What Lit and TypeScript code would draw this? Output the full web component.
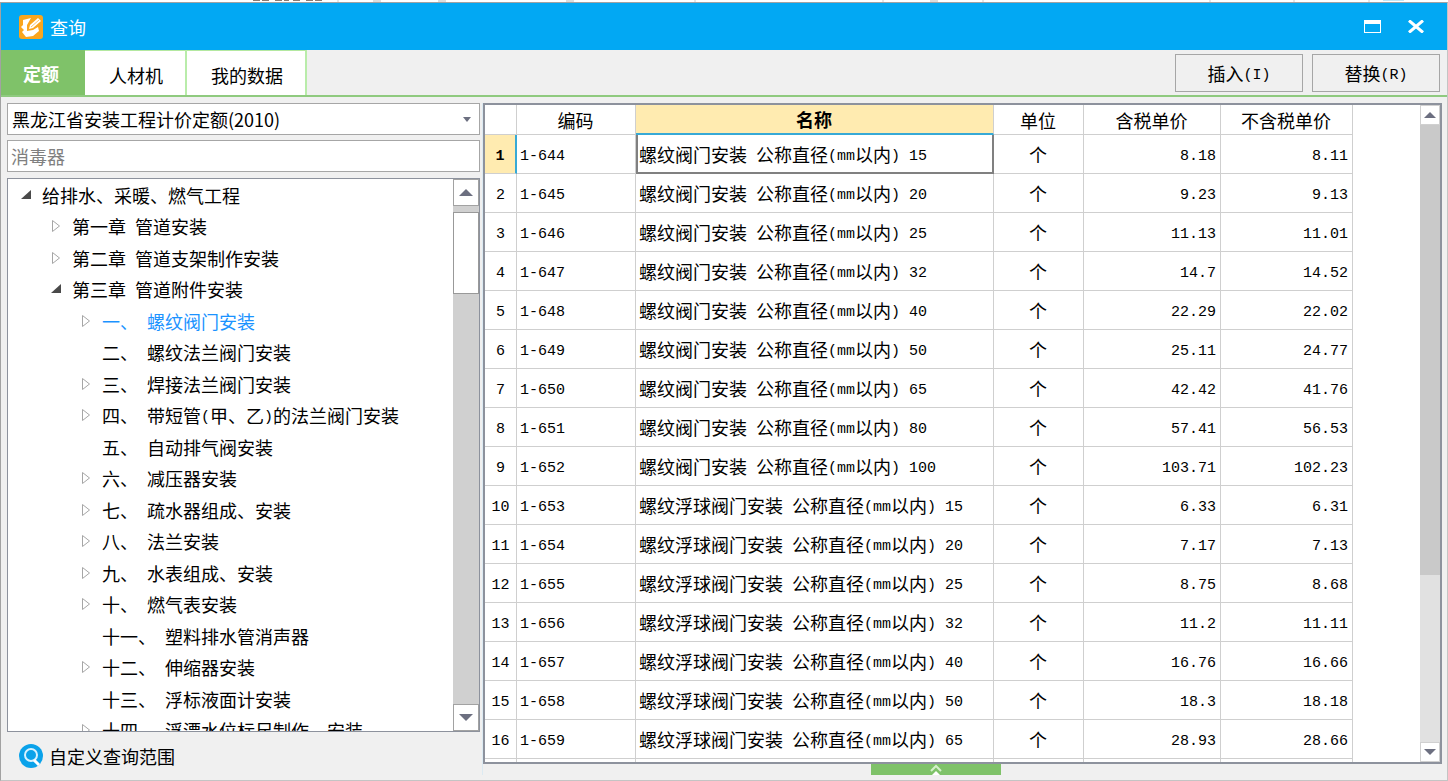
import { LitElement, html, css, svg } from "lit";
import { customElement, state } from "lit/decorators.js";

type Mark = "open" | "closed" | "none";
interface TreeNode { level: number; mark: Mark; label: string; }
interface Row { code: string; name: string; price: string; net: string; }

const TREE: TreeNode[] = [
  { level: 0, mark: "open", label: "给排水、采暖、燃气工程" },
  { level: 1, mark: "closed", label: "第一章 管道安装" },
  { level: 1, mark: "closed", label: "第二章 管道支架制作安装" },
  { level: 1, mark: "open", label: "第三章 管道附件安装" },
  { level: 2, mark: "closed", label: "一、 螺纹阀门安装" },
  { level: 2, mark: "none", label: "二、 螺纹法兰阀门安装" },
  { level: 2, mark: "closed", label: "三、 焊接法兰阀门安装" },
  { level: 2, mark: "closed", label: "四、 带短管(甲、乙)的法兰阀门安装" },
  { level: 2, mark: "none", label: "五、 自动排气阀安装" },
  { level: 2, mark: "closed", label: "六、 减压器安装" },
  { level: 2, mark: "closed", label: "七、 疏水器组成、安装" },
  { level: 2, mark: "closed", label: "八、 法兰安装" },
  { level: 2, mark: "closed", label: "九、 水表组成、安装" },
  { level: 2, mark: "closed", label: "十、 燃气表安装" },
  { level: 2, mark: "none", label: "十一、 塑料排水管消声器" },
  { level: 2, mark: "closed", label: "十二、 伸缩器安装" },
  { level: 2, mark: "none", label: "十三、 浮标液面计安装" },
  { level: 2, mark: "closed", label: "十四、 浮漂水位标尺制作、安装" },
];

const SCREW = "螺纹阀门安装 公称直径(mm以内) ";
const FLOAT = "螺纹浮球阀门安装 公称直径(mm以内) ";
const ROWS: Row[] = [
  { code: "1-644", name: SCREW + "15", price: "8.18", net: "8.11" },
  { code: "1-645", name: SCREW + "20", price: "9.23", net: "9.13" },
  { code: "1-646", name: SCREW + "25", price: "11.13", net: "11.01" },
  { code: "1-647", name: SCREW + "32", price: "14.7", net: "14.52" },
  { code: "1-648", name: SCREW + "40", price: "22.29", net: "22.02" },
  { code: "1-649", name: SCREW + "50", price: "25.11", net: "24.77" },
  { code: "1-650", name: SCREW + "65", price: "42.42", net: "41.76" },
  { code: "1-651", name: SCREW + "80", price: "57.41", net: "56.53" },
  { code: "1-652", name: SCREW + "100", price: "103.71", net: "102.23" },
  { code: "1-653", name: FLOAT + "15", price: "6.33", net: "6.31" },
  { code: "1-654", name: FLOAT + "20", price: "7.17", net: "7.13" },
  { code: "1-655", name: FLOAT + "25", price: "8.75", net: "8.68" },
  { code: "1-656", name: FLOAT + "32", price: "11.2", net: "11.11" },
  { code: "1-657", name: FLOAT + "40", price: "16.76", net: "16.66" },
  { code: "1-658", name: FLOAT + "50", price: "18.3", net: "18.18" },
  { code: "1-659", name: FLOAT + "65", price: "28.93", net: "28.66" },
];

// Latin runs are set in a half-width face beside the full-width characters.
const mixed = (text: string) =>
  text.split(/([\x20-\x7e]+)/).filter(Boolean).map((part) =>
    /^[\x20-\x7e]/.test(part) ? html`<span class="latin">${part}</span>` : part);

const marks = {
  open: svg`<path d="M10 1v9H0z" fill="#4a4a4a"/>`,
  closed: svg`<path d="M1.5 0.5v11l7-5.5z" fill="#fff" stroke="#a6a6a6"/>`,
  none: svg``,
};

const arrow = (up: boolean) => html`<svg width="14" height="7" viewBox="0 0 14 7" aria-hidden="true">
  <path d=${up ? "M7 0l7 7H0z" : "M0 0h14L7 7z"} fill="#6c6f80"/></svg>`;

@customElement("app-root")
export class AppRoot extends LitElement {
  @state() private node = 4;
  @state() private row = 0;

  static styles = css`
    :host {
      display: flex; flex-direction: column; height: 100vh; overflow: hidden;
      background: #fff; color: #000;
      font: 18px/24px "Noto Sans CJK SC", sans-serif;
    }
    * { box-sizing: border-box; }
    button, input, select { font: inherit; color: inherit; margin: 0; border-radius: 0; }
    button { padding: 0; border: 0; background: none; cursor: pointer; }
    .latin { font-family: "Liberation Mono", monospace; font-size: 15px; line-height: 0; vertical-align: 2px; white-space: pre; }
    .behind { flex: none; height: 2px; background: #fff; }
    .behind svg { display: block; }
    .window {
      flex: 1; min-height: 0; display: flex; flex-direction: column;
      border: 1px solid #a2a2a2; border-right-color: #c4c4c4; border-bottom-color: #c4c4c4;
      background: #f0f0f0;
    }
    .title { flex: none; height: 47px; background: #02a8f3; color: #fff; display: flex; align-items: center; padding: 0 22px 0 18px; }
    .title h1 { flex: 1; margin: 0 0 0 7px; font-size: 18px; font-weight: 400; }
    .title button { display: flex; }
    .title button + button { margin-left: 26px; }
    .bar { flex: none; height: 47px; display: flex; border-bottom: 2px solid #8fca7f; padding-right: 7px; }
    .tab { height: 45px; background: #fff; border-top: 1px solid #b4e8a0; border-right: 2px solid #b9ecaa; padding: 4px 22px 0 24px; }
    .tab.on { background: #7fc269; border-color: #7fc269; color: #fff; font-weight: 700; padding: 0 24px 0 22px; }
    .acts { margin-left: auto; display: flex; gap: 9px; padding-top: 4px; }
    .act { width: 128px; height: 38px; border: 1px solid #a6a6a6; background: #f0f0f0; }
    .body { flex: 1; min-height: 0; display: grid; grid-template: minmax(0, 1fr) / 473px minmax(0, 1fr); padding: 6px 5px 0 6px; }
    .side { display: flex; flex-direction: column; min-height: 0; }
    .pick { flex: none; display: grid; align-items: center; margin-bottom: 5px; }
    .pick select, .pick svg { grid-area: 1 / 1; }
    .pick svg { justify-self: end; margin-right: 9px; pointer-events: none; }
    .pick select, .find { width: 100%; height: 32px; appearance: none; border: 1px solid #a6a6a6; background: #fff; padding: 0 4px; outline: none; }
    .find { flex: none; margin-bottom: 6px; padding: 0 3px; }
    .find::placeholder { color: #808080; opacity: 1; }
    .tree { flex: 1; min-height: 0; display: flex; overflow: hidden; border: 1px solid #8d929d; background: #fff; }
    .nodes { flex: 1; height: 567px; margin: 0; padding: 0; list-style: none; display: grid; grid-auto-rows: minmax(0, 1fr); }
    .node { display: flex; align-items: center; gap: 10px; white-space: nowrap; padding-left: 13px; cursor: default; }
    .l1 { padding-left: 43px; }
    .l2 { padding-left: 73px; }
    .node svg { flex: none; }
    .node.on { color: #1b93ff; }
    .vbar { flex: none; width: 26px; display: flex; flex-direction: column; background: #d0d0d0; }
    .vbar button { flex: none; height: 27px; display: flex; align-items: center; justify-content: center; background: #fff; border: 1px solid #a2a2a2; }
    .thumb { height: 82px; margin: 6px 0 auto; background: #fff; border: 1px solid #999; }
    .foot { flex: none; height: 48px; display: flex; align-items: center; gap: 6px; padding-left: 12px; }
    .foot svg { flex: none; }
    .main { min-width: 0; min-height: 0; display: flex; flex-direction: column; border-left: 1px solid #dceaf2; margin: 0 0 5px 2px; }
    .panel { flex: 1; min-height: 0; display: flex; overflow: hidden; border: 2px solid #8d929d; background: #fff; }
    .scroll { flex: 1; overflow: hidden; }
    table { border-collapse: separate; border-spacing: 0; table-layout: fixed; width: 868px; }
    .c0 { width: 32px; } .c1 { width: 119px; } .c2 { width: 358px; } .c3 { width: 90px; } .c4 { width: 137px; } .c5 { width: 132px; }
    th, td { padding: 0 4px 0 3px; border-right: 1px solid #cfcfcf; border-bottom: 1px solid #cfcfcf; font-weight: 400; white-space: nowrap; overflow: hidden; }
    thead th { height: 30px; }
    tbody th, tbody td { height: 39px; text-align: left; }
    tbody th { text-align: center; padding: 0; }
    td.num { text-align: right; }
    td.unit { text-align: center; }
    th.hot { background: #ffebb0; font-weight: 700; border-bottom: 2px solid #37a9d6; }
    tr.on th { background: #ffebb0; font-weight: 700; border-right: 2px solid #37a9d6; }
    tr.on .name { box-shadow: inset 2px 0 #808080, inset -1px -1px #808080; border-color: #808080; }
    .rbar { flex: none; width: 20px; display: flex; flex-direction: column; background: #e1e1e1; }
    .rbar button { flex: none; height: 20px; display: flex; align-items: center; justify-content: center; background: #fff; border: 1px solid #d0d0d0; }
    .rbar svg { width: 12px; height: 6px; }
    .rthumb { height: 450px; background: #c9c9c9; margin-bottom: auto; }
    .pull { flex: none; align-self: center; width: 130px; height: 11px; background: #7fc269; display: flex; justify-content: center; margin-right: 54px; }
  `;

  render() {
    return html`
      <div class="behind"><svg width="1448" height="2" aria-hidden="true">
        <path d="M253 0h17M275 0h14M293 0h8M306 0h18" stroke="#8a7a72" stroke-width="2" stroke-dasharray="7 2"/>
        <path d="M338 0v2M695 0v2M883 0v2M983 0v2M1210 0v2M1294 0v2M1369 0v2" stroke="#ccc"/>
        <path d="M373 1h8M438 1h8M566 1h8M930 1h8" stroke="#bbb"/>
        <path d="M1383 0h21" stroke="#bfe6f7" stroke-width="2"/>
      </svg></div>
      <div class="window">
        <header class="title">
          <svg width="24" height="24" viewBox="0 0 24 24" aria-hidden="true">
            <rect width="24" height="24" rx="3" fill="#faa61e"/>
            <path d="M4 5l8-2-4 7v6l6-1 5-3 1 4-6 5-7 1-4-5 2-2-3-3 2-2z" fill="#fff"/>
            <path d="M10 14l1-4 8-7 3 3-8 7z" fill="#fff"/>
            <path d="M12 12l8-7" stroke="#fbc56a"/>
          </svg>
          <h1>查询</h1>
          <button aria-label="最大化"><svg width="17" height="13" viewBox="0 0 17 13"><path d="M0 0h17v13H0zM1 4v8h15V4z" fill="#fff" fill-rule="evenodd"/></svg></button>
          <button aria-label="关闭"><svg width="18" height="13" viewBox="0 0 18 13"><path d="M2 0.5l14 12M16 0.5l-14 12" stroke="#fff" stroke-width="3"/></svg></button>
        </header>
        <nav class="bar">
          <button class="tab on">定额</button>
          <button class="tab">人材机</button>
          <button class="tab">我的数据</button>
          <div class="acts">
            <button class="act">${mixed("插入(I)")}</button>
            <button class="act">${mixed("替换(R)")}</button>
          </div>
        </nav>
        <div class="body">
          <section class="side">
            <div class="pick">
              <select aria-label="定额库"><option>黑龙江省安装工程计价定额(2010)</option></select>
              <svg width="8" height="5" viewBox="0 0 8 5" aria-hidden="true"><path d="M0 0h8L4 5z" fill="#6c6f80"/></svg>
            </div>
            <input class="find" type="text" placeholder="消毒器" aria-label="消毒器" />
            <div class="tree">
              <ul class="nodes" role="tree">
                ${TREE.map((n, i) => html`<li role="treeitem" class="node l${n.level} ${i === this.node ? "on" : ""}" @click=${() => (this.node = i)}>
                  <svg width="11" height="12" viewBox="0 0 11 12" aria-hidden="true">${marks[n.mark]}</svg>
                  <span>${mixed(n.label)}</span></li>`)}
              </ul>
              <div class="vbar">
                <button aria-label="向上">${arrow(true)}</button>
                <div class="thumb"></div>
                <button aria-label="向下">${arrow(false)}</button>
              </div>
            </div>
            <button class="foot">
              <svg width="24" height="24" viewBox="0 0 24 24" aria-hidden="true">
                <circle cx="12" cy="12" r="12" fill="#0aa2ea"/>
                <circle cx="12" cy="11" r="6" fill="none" stroke="#d8f2ff" stroke-width="2"/>
                <path d="M15 16l5 5" stroke="#fff" stroke-width="3"/>
              </svg>
              <span>自定义查询范围</span>
            </button>
          </section>
          <section class="main">
            <div class="panel">
              <div class="scroll">
                <table>
                  <colgroup><col class="c0" /><col class="c1" /><col class="c2" /><col class="c3" /><col class="c4" /><col class="c5" /></colgroup>
                  <thead><tr><th></th><th>编码</th><th class="hot">名称</th><th>单位</th><th>含税单价</th><th>不含税单价</th></tr></thead>
                  <tbody>
                    ${ROWS.map((r, i) => html`<tr class=${i === this.row ? "on" : ""} @click=${() => (this.row = i)}>
                      <th scope="row">${mixed(String(i + 1))}</th>
                      <td>${mixed(r.code)}</td><td class="name">${mixed(r.name)}</td><td class="unit">个</td>
                      <td class="num">${mixed(r.price)}</td><td class="num">${mixed(r.net)}</td></tr>`)}
                    <tr><th></th><td></td><td></td><td></td><td></td><td></td></tr>
                  </tbody>
                </table>
              </div>
              <div class="rbar">
                <button aria-label="向上">${arrow(true)}</button>
                <div class="rthumb"></div>
                <button aria-label="向下">${arrow(false)}</button>
              </div>
            </div>
            <button class="pull" aria-label="展开"><svg width="14" height="11" viewBox="0 0 14 11">
              <path d="M2 7l5-5 5 5" fill="none" stroke="#d5f0cb" stroke-width="2"/><path d="M3 11l4-4 4 4z" fill="#fff"/></svg></button>
          </section>
        </div>
      </div>`;
  }
}
